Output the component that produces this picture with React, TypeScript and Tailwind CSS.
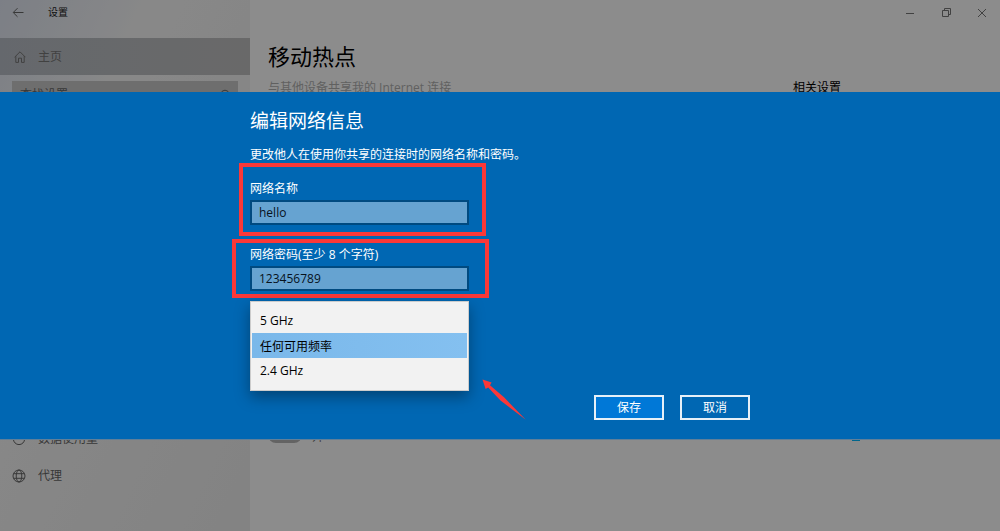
import React, { useState } from 'react';

const BackIcon = () => (
  <svg className="w-3 h-3" viewBox="0 0 12 12" fill="none" stroke="currentColor">
    <path d="M11.5 5.5H1.5M5.5 1.2L1.2 5.5l4.3 4.3" />
  </svg>
);

const HomeIcon = () => (
  <svg className="w-3 h-3" viewBox="0 0 12 12" fill="none" stroke="currentColor">
    <path d="M0.6 6.2L6 0.8l5.4 5.4M1.8 5.2v6.2h2.7V7.2h3v4.2h2.7V5.2" />
  </svg>
);

const SearchIcon = () => (
  <svg className="w-3 h-3" viewBox="0 0 12 12" fill="none" stroke="currentColor">
    <circle cx="7" cy="4.8" r="3.6" />
    <path d="M4.4 7.4L0.8 11" />
  </svg>
);

const UsageIcon = () => (
  <svg className="w-3.5 h-3.5" viewBox="0 0 14 14" fill="none" stroke="currentColor">
    <circle cx="7" cy="7" r="5.6" />
    <path d="M7 1.4V7h5.6" />
  </svg>
);

const GlobeIcon = () => (
  <svg className="w-3.5 h-3.5" viewBox="0 0 14 14" fill="none" stroke="currentColor">
    <circle cx="7" cy="7" r="6" />
    <ellipse cx="7" cy="7" rx="2.8" ry="6" />
    <path d="M1.6 4.7h10.8M1.6 9.3h10.8" />
  </svg>
);

const ArrowMark = () => (
  <svg className="absolute left-[232px] top-[78px] w-11 h-[41px]" viewBox="0 0 44 41" fill="#fb3838">
    <path d="M0.5 0.5L9.6 3.6L8 6.2L22 18.3L43.8 40.8L18.5 21.5L6.2 8.6L3.6 10Z" />
  </svg>
);

const navItems = [
  { label: '数据使用量', icon: <UsageIcon /> },
  { label: '代理', icon: <GlobeIcon /> },
];

const bands = ['5 GHz', '任何可用频率', '2.4 GHz'];

const fieldClass =
  'block w-full h-[25px] px-[7px] border-2 border-[#004a80] bg-[#66a3d1] text-[#06121c] text-xs outline-none';

const App = () => {
  const [name, setName] = useState('hello');
  const [password, setPassword] = useState('123456789');
  const [band, setBand] = useState('任何可用频率');

  return (
    <div className="relative flex min-h-screen overflow-hidden bg-white text-xs font-['Open_Sans','Noto_Sans_CJK_SC',sans-serif]">
      <aside className="w-1/4 flex flex-col bg-linear-to-br from-[#e2e8f4] via-[#f8f8f8] via-30% to-[#eeeeee]">
        <div className="flex items-center gap-6 h-[38px] pl-3 pb-3 text-[10px] text-[#222222]">
          <button aria-label="返回" className="text-[#666666]">
            <BackIcon />
          </button>
          <span>设置</span>
        </div>
        <a href="#home" className="flex items-center gap-3 h-[37px] px-3.5 bg-linear-to-r from-[#b9bec6] to-[#c0c0c0] text-[#777777]">
          <HomeIcon />
          主页
        </a>
        <label className="flex items-center mt-1.5 mx-3 h-7 px-2 bg-[#c8c8c8] text-[#666666]">
          <input
            aria-label="查找设置"
            placeholder="查找设置"
            className="flex-1 min-w-0 bg-transparent outline-none placeholder:text-[#666666]"
          />
          <SearchIcon />
        </label>
        <nav className="mt-auto mb-[37px]">
          {navItems.map(item => (
            <a key={item.label} href="#nav" className="flex items-center gap-3 h-[37px] px-3 text-[#666666]">
              {item.icon}
              {item.label}
            </a>
          ))}
        </nav>
      </aside>

      <main className="flex-1 flex flex-col pl-[18px]">
        <div className="flex justify-end items-center gap-6 h-[26px] pr-3 text-[#777777]">
          <button aria-label="最小化">
            <svg className="w-3 h-3" viewBox="0 0 12 12" fill="none" stroke="currentColor">
              <path d="M2 6.5h8" />
            </svg>
          </button>
          <button aria-label="还原">
            <svg className="w-3 h-3" viewBox="0 0 12 12" fill="none" stroke="currentColor">
              <path d="M2.5 3.5h6v6h-6zM4.5 3.5v-2h6v6h-2" />
            </svg>
          </button>
          <button aria-label="关闭">
            <svg className="w-3 h-3" viewBox="0 0 12 12" fill="none" stroke="currentColor">
              <path d="M2 2l8 8M10 2l-8 8" />
            </svg>
          </button>
        </div>
        <h1 className="mt-3.5 text-[22px] leading-8 text-black">移动热点</h1>
        <div className="flex mt-2 leading-4">
          <p className="w-[525px] text-[#b0b0b0]">与其他设备共享我的 Internet 连接</p>
          <h2 className="text-black">相关设置</h2>
        </div>
        <div className="flex items-end gap-2.5 mt-auto mb-[86px] leading-4 text-[#777777]">
          <button role="switch" aria-checked="false" aria-label="移动热点" className="w-[34px] h-4 mb-0.5 rounded-full bg-[#b4b4b4]" />
          <span>开</span>
          <svg className="ml-[516px] w-3 h-4" viewBox="0 0 12 16" fill="#00bbff">
            <path d="M2 3h8v9H2z" />
          </svg>
        </div>
      </main>

      <div className="absolute inset-0 flex items-center bg-black/45">
        <div role="dialog" aria-labelledby="dialog-title" className="w-full bg-[#0067b3] text-white shadow-[0_1px_0_#5f7f99]">
          <div className="w-1/2 mx-auto pt-[17px] pb-[19px]">
            <h2 id="dialog-title" className="text-[19px] leading-6">编辑网络信息</h2>
            <p className="mt-3.5 leading-4">更改他人在使用你共享的连接时的网络名称和密码。</p>

            <div className="w-[219px] mt-[18px]">
              <div className="relative">
                <div className="absolute -left-[11px] -right-[17px] -top-[18px] -bottom-[11px] border-4 border-[#fb3838] pointer-events-none" />
                <label htmlFor="network-name" className="block mb-[3px] leading-4">网络名称</label>
                <input id="network-name" value={name} onChange={e => setName(e.target.value)} className={fieldClass} />
              </div>

              <div className="relative mt-[22px]">
                <div className="absolute -left-[18px] -right-[20px] -top-[8px] -bottom-[7px] border-4 border-[#fb3838] pointer-events-none" />
                <label htmlFor="network-password" className="block mb-[3px] leading-4">网络密码(至少 8 个字符)</label>
                <input id="network-password" value={password} onChange={e => setPassword(e.target.value)} className={fieldClass} />
              </div>

              <div className="relative mt-2.5">
                <select
                  size={3}
                  aria-label="网络频带"
                  value={band}
                  onChange={e => setBand(e.target.value)}
                  className="block w-full h-[90px] px-px pt-1.5 overflow-hidden border border-[#cccccc] bg-[#f2f2f2] text-black shadow-[0_6px_14px_rgba(0,0,0,0.35)] outline-none"
                >
                  {bands.map(item => (
                    <option
                      key={item}
                      value={item}
                      className="h-[25px] min-h-[25px] px-2 pt-1 pb-0 text-black checked:bg-linear-to-r checked:from-[#7ab8ea] checked:to-[#84c0f0]"
                    >
                      {item}
                    </option>
                  ))}
                </select>
                <ArrowMark />
              </div>
            </div>

            <div className="flex justify-end gap-4 mt-1">
              <button className="w-[70px] h-[25px] border-2 border-[#e6f0f8] bg-[#0078d7]">保存</button>
              <button className="w-[70px] h-[25px] border-2 border-[#e6f0f8]">取消</button>
            </div>
          </div>
        </div>
      </div>
    </div>
  );
};

export default App;
